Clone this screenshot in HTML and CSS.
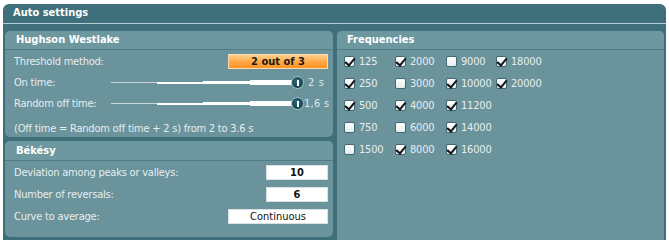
FILE: index.html
```html
<!DOCTYPE html>
<html>
<head>
<meta charset="utf-8">
<link rel="stylesheet" href="styles.css">
</head>
<body>
<div class="topstrip"></div>
<div class="window">
  <div class="title">Auto settings</div>
  <div class="title-line"></div>
  <div class="content">
    <div class="left">
      <div class="group hw">
        <div class="group-head">Hughson Westlake</div>
        <div class="group-body">
          <div class="row">
            <span class="label">Threshold method:</span>
            <span class="btn-orange">2 out of 3</span>
          </div>
          <div class="row">
            <span class="label slabel">On time:</span>
            <div class="slider">
              <span class="seg s1"></span><span class="seg s2"></span><span class="seg s3"></span><span class="seg s4"></span>
              <span class="knob"></span>
            </div>
            <span class="val">2 s</span>
          </div>
          <div class="row">
            <span class="label slabel">Random off time:</span>
            <div class="slider">
              <span class="seg s1"></span><span class="seg s2"></span><span class="seg s3"></span><span class="seg s4"></span>
              <span class="knob"></span>
            </div>
            <span class="val val2">1,6 s</span>
          </div>
          <div class="note">(Off time = Random off time + 2 s) from 2 to 3.6 s</div>
        </div>
      </div>
      <div class="group bek">
        <div class="group-head">Békésy</div>
        <div class="group-body">
          <div class="row">
            <span class="label">Deviation among peaks or valleys:</span>
            <span class="box small">10</span>
          </div>
          <div class="row">
            <span class="label">Number of reversals:</span>
            <span class="box small">6</span>
          </div>
          <div class="row">
            <span class="label">Curve to average:</span>
            <span class="box wide">Continuous</span>
          </div>
        </div>
      </div>
    </div>
    <div class="group freq">
      <div class="group-head">Frequencies</div>
      <div class="freq-grid">
        <div class="item"><span class="cb on"></span>125</div>
        <div class="item"><span class="cb on"></span>2000</div>
        <div class="item"><span class="cb"></span>9000</div>
        <div class="item"><span class="cb on"></span>18000</div>

        <div class="item"><span class="cb on"></span>250</div>
        <div class="item"><span class="cb"></span>3000</div>
        <div class="item"><span class="cb on"></span>10000</div>
        <div class="item"><span class="cb on"></span>20000</div>

        <div class="item"><span class="cb on"></span>500</div>
        <div class="item"><span class="cb on"></span>4000</div>
        <div class="item"><span class="cb on"></span>11200</div>
        <div class="item"></div>

        <div class="item"><span class="cb"></span>750</div>
        <div class="item"><span class="cb"></span>6000</div>
        <div class="item"><span class="cb on"></span>14000</div>
        <div class="item"></div>

        <div class="item"><span class="cb"></span>1500</div>
        <div class="item"><span class="cb on"></span>8000</div>
        <div class="item"><span class="cb on"></span>16000</div>
        <div class="item"></div>
      </div>
    </div>
  </div>
</div>
</body>
</html>
```
FILE: styles.css
```css
* { box-sizing: border-box; }
html, body { margin: 0; padding: 0; background: #ffffff; }
body {
  font-family: "DejaVu Sans Condensed", "DejaVu Sans", sans-serif;
  font-size: 11px;
  color: #e6eef0;
  width: 669px;
  height: 240px;
  overflow: hidden;
}
.topstrip { height: 4px; }
.window {
  margin-left: 3px;
  width: 663px;
  height: 236px;
  background: #3e6f7b;
  border-radius: 6px 6px 0 0;
  overflow: hidden;
  display: flex;
  flex-direction: column;
}
.title {
  height: 19px;
  line-height: 18px;
  padding-left: 10px;
  font-weight: bold;
  color: #ffffff;
}
.title-line { height: 1px; background: #b4d0d6; }
.content {
  margin-top: 7px;
  flex: 1;
  display: flex;
  gap: 4px;
  padding: 0 2px;
}
.left {
  width: 328px;
  display: flex;
  flex-direction: column;
  gap: 4px;
}
.group {
  background: #6a939b;
  border-radius: 5px;
  overflow: hidden;
}
.group-head {
  height: 19px;
  line-height: 18px;
  padding-left: 11px;
  font-weight: bold;
  color: #ffffff;
  background: #6d989f;
  border-bottom: 1px solid #4f7b86;
}
.hw { height: 106px; }
.bek { height: 96px; }
.bek .group-head { height: 20px; line-height: 19px; }
.group-body { padding: 1px 5px 0 9px; letter-spacing: -0.22px; }
.row {
  height: 21px;
  display: flex;
  align-items: center;
  white-space: nowrap;
}
.bek .group-body { padding-top: 0; }
.bek .row { height: 22px; }
.label { flex: 1; white-space: nowrap; }
.slabel { flex: 0 0 97px; }
.btn-orange {
  width: 100px;
  height: 15px;
  line-height: 13px;
  text-align: center;
  font-weight: bold;
  color: #1a1a1a;
  letter-spacing: 0;
  background: linear-gradient(#ffcf8e, #ffa642 55%, #ff9324);
  border: 1px solid #f6dcb8;
}
.slider {
  flex: 0 0 193px;
  height: 14px;
  display: flex;
  align-items: center;
}
.seg { display: block; background: #ffffff; }
.s1 { width: 46px; height: 1px; background: #c9d7da; }
.s2 { width: 46px; height: 2px; }
.s3 { width: 47px; height: 3px; }
.s4 { width: 47px; height: 5px; }
.knob {
  flex: 0 0 13px;
  height: 13px;
  margin-left: -6px;
  border-radius: 50%;
  background: radial-gradient(circle at 45% 35%, #2f6a78, #154452 70%);
  border: 1px solid #9fc0c7;
  position: relative;
}
.knob::after {
  content: "";
  position: absolute;
  left: 4.5px;
  top: 2.5px;
  width: 2px;
  height: 6px;
  background: #ffffff;
}
.val { margin-left: 4px; color: #dde7e9; letter-spacing: 0.6px; white-space: nowrap; }
.val2 { margin-left: 0; letter-spacing: 0.3px; }
.note { margin-top: 8px; line-height: 14px; white-space: nowrap; }
.box {
  height: 15px;
  line-height: 14px;
  background: #ffffff;
  color: #111111;
  text-align: center;
  letter-spacing: 0;
  border: 1px solid #d8e2e4;
}
.small { width: 62px; font-weight: bold; }
.wide { width: 100px; }
.freq { flex: 1; border-radius: 5px 5px 0 0; }
.freq .group-head { padding-left: 10px; }
.freq-grid {
  display: grid;
  grid-template-columns: 51px 51px 50px 60px;
  grid-auto-rows: 22px;
  padding: 0 0 0 7px;
  letter-spacing: -0.2px;
}
.item {
  display: flex;
  align-items: center;
  white-space: nowrap;
}
.cb {
  width: 11px;
  height: 11px;
  margin-right: 4px;
  border-radius: 2px;
  border: 1px solid #3f6a75;
  background: linear-gradient(#ffffff, #e4ecee);
  position: relative;
}
.cb.on::after {
  content: "";
  position: absolute;
  left: 2px;
  top: -1px;
  width: 4px;
  height: 8px;
  border-right: 2px solid #141414;
  border-bottom: 2px solid #141414;
  transform: rotate(40deg);
}
```
